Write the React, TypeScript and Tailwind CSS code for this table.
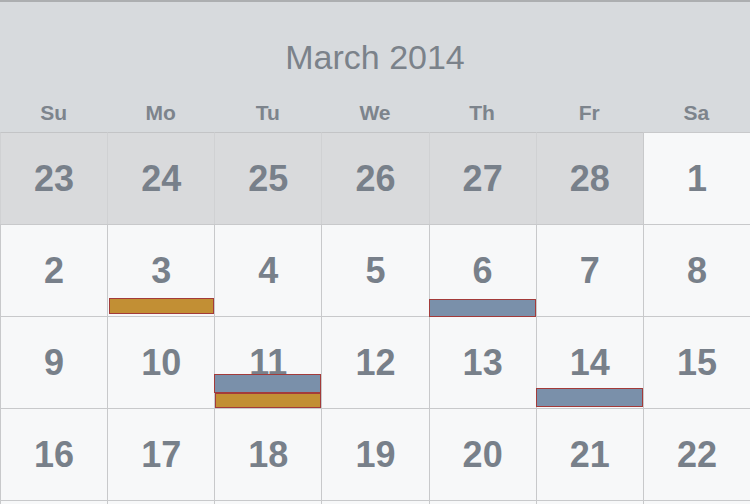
const weekdays = ["Su", "Mo", "Tu", "We", "Th", "Fr", "Sa"];

type Bar = { color: "gold" | "blue"; pos: string };

const events: Record<number, Bar[]> = {
  3: [{ color: "gold", pos: "left-[1px] right-0 bottom-[2px] h-[16px]" }],
  6: [{ color: "blue", pos: "left-[-1px] right-0 bottom-[-1px] h-[18px]" }],
  11: [
    { color: "blue", pos: "left-[-1px] right-0 bottom-[15px] h-[19px]" },
    { color: "gold", pos: "left-0 right-0 bottom-0 h-[15px]" },
  ],
  14: [{ color: "blue", pos: "left-[-1px] right-0 bottom-[1px] h-[19px]" }],
};

const days: { n: number; prev: boolean }[] = [
  ...[23, 24, 25, 26, 27, 28].map((n) => ({ n, prev: true })),
  ...Array.from({ length: 22 }, (_, i) => ({ n: i + 1, prev: false })),
];

export default function App() {
  return (
    <div
      className="w-[750px] h-[504px] overflow-hidden bg-[#f7f8f9]"
      style={{ fontFamily: '"Liberation Sans", Arial, sans-serif' }}
    >
      <div className="h-[132px] bg-[#d7dadd] border-t-2 border-[#acaeb0] flex flex-col">
        <div className="pt-[35px] h-[99px] text-center text-[34px] leading-[40px] text-[#7b828a]">
          March 2014
        </div>
        <div className="grid grid-cols-7">
          {weekdays.map((d) => (
            <div
              key={d}
              className="text-center text-[21px] leading-[24px] font-bold text-[#7d848c]"
            >
              {d}
            </div>
          ))}
        </div>
      </div>

      <div className="grid grid-cols-7">
        {days.map((d, i) => (
          <div
            key={i}
            className={
              d.prev
                ? "relative h-[92px] border-t border-l border-t-[#c3c4c6] border-l-[#d0d1d3] bg-[#d9dadc] flex items-center justify-center"
                : "relative h-[92px] border-t border-l border-[#c8c9cb] bg-[#f7f8f9] flex items-center justify-center"
            }
          >
            <span className="text-[36px] font-bold text-[#78808a] leading-none">
              {d.n}
            </span>
            {!d.prev &&
              (events[d.n] ?? []).map((b, j) => (
                <div
                  key={j}
                  className={
                    "absolute z-10 border border-[#a33b3a] " +
                    b.pos +
                    (b.color === "gold" ? " bg-[#c28f34]" : " bg-[#7a90aa]")
                  }
                />
              ))}
          </div>
        ))}
        {weekdays.map((d) => (
          <div key={"next-" + d} className="h-[92px] border-t border-l border-[#c8c9cb] bg-[#f7f8f9]" />
        ))}
      </div>
    </div>
  );
}
